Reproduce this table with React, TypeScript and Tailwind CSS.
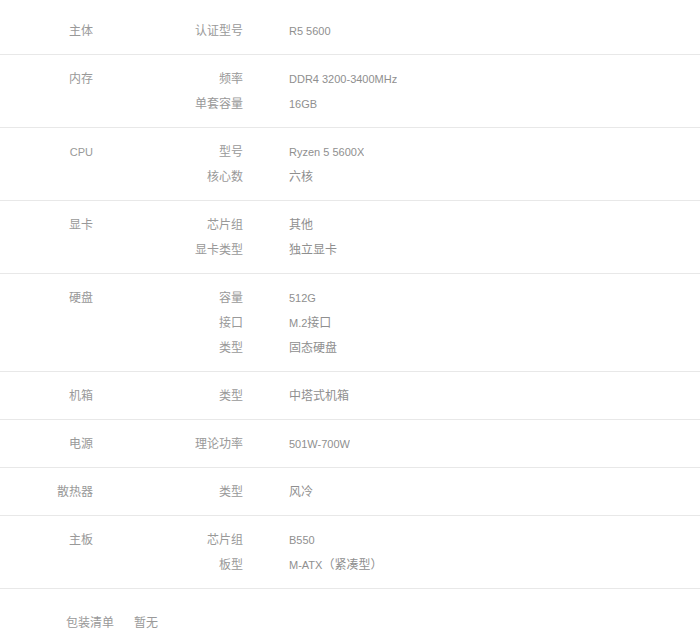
import React from "react";

type Group = { name: string; items: [string, string][] };

const groups: Group[] = [
  { name: "主体", items: [["认证型号", "R5 5600"]] },
  { name: "内存", items: [["频率", "DDR4 3200-3400MHz"], ["单套容量", "16GB"]] },
  { name: "CPU", items: [["型号", "Ryzen 5 5600X"], ["核心数", "六核"]] },
  { name: "显卡", items: [["芯片组", "其他"], ["显卡类型", "独立显卡"]] },
  { name: "硬盘", items: [["容量", "512G"], ["接口", "M.2接口"], ["类型", "固态硬盘"]] },
  { name: "机箱", items: [["类型", "中塔式机箱"]] },
  { name: "电源", items: [["理论功率", "501W-700W"]] },
  { name: "散热器", items: [["类型", "风冷"]] },
  { name: "主板", items: [["芯片组", "B550"], ["板型", "M-ATX（紧凑型）"]] },
];

function T({ s }: { s: string }) {
  const parts = s.split(/([\u3000-\u303f\u4e00-\u9fff\uff00-\uffef]+)/).filter((p) => p.length > 0);
  return (
    <>
      {parts.map((p, i) =>
        /[\u3000-\u303f\u4e00-\u9fff\uff00-\uffef]/.test(p) ? (
          <span key={i} className="text-[12px] font-['Noto_Sans_CJK_SC',sans-serif]">
            {p}
          </span>
        ) : (
          <span key={i} className="text-[11px] font-['Liberation_Sans','Noto_Sans_CJK_SC',sans-serif]">
            {p}
          </span>
        )
      )}
    </>
  );
}

export default function App() {
  return (
    <div className="w-[700px] bg-white pt-[7px] text-[#999] font-['Noto_Sans_CJK_SC',sans-serif] text-[12px]">
      {groups.map((g, gi) => (
        <div key={gi} className="flex border-b border-[#e8e8e8] pt-[10px] pb-[12px]">
          <div className="w-[93px] h-[25px] shrink-0 overflow-hidden text-right leading-[25px]">
            <T s={g.name} />
          </div>
          <div className="flex flex-col">
            {g.items.map(([k, v], i) => (
              <div key={i} className="flex h-[25px] overflow-hidden leading-[25px]">
                <div className="w-[150px] shrink-0 text-right">
                  <T s={k} />
                </div>
                <div className="pl-[46px] text-[#8f8f8f]">
                  <T s={v} />
                </div>
              </div>
            ))}
          </div>
        </div>
      ))}
      <div className="flex h-[45px] pt-[20px] leading-[25px]">
        <div className="pl-[66px]">
          <T s="包装清单" />
        </div>
        <div className="pl-[20px]">
          <T s="暂无" />
        </div>
      </div>
    </div>
  );
}
